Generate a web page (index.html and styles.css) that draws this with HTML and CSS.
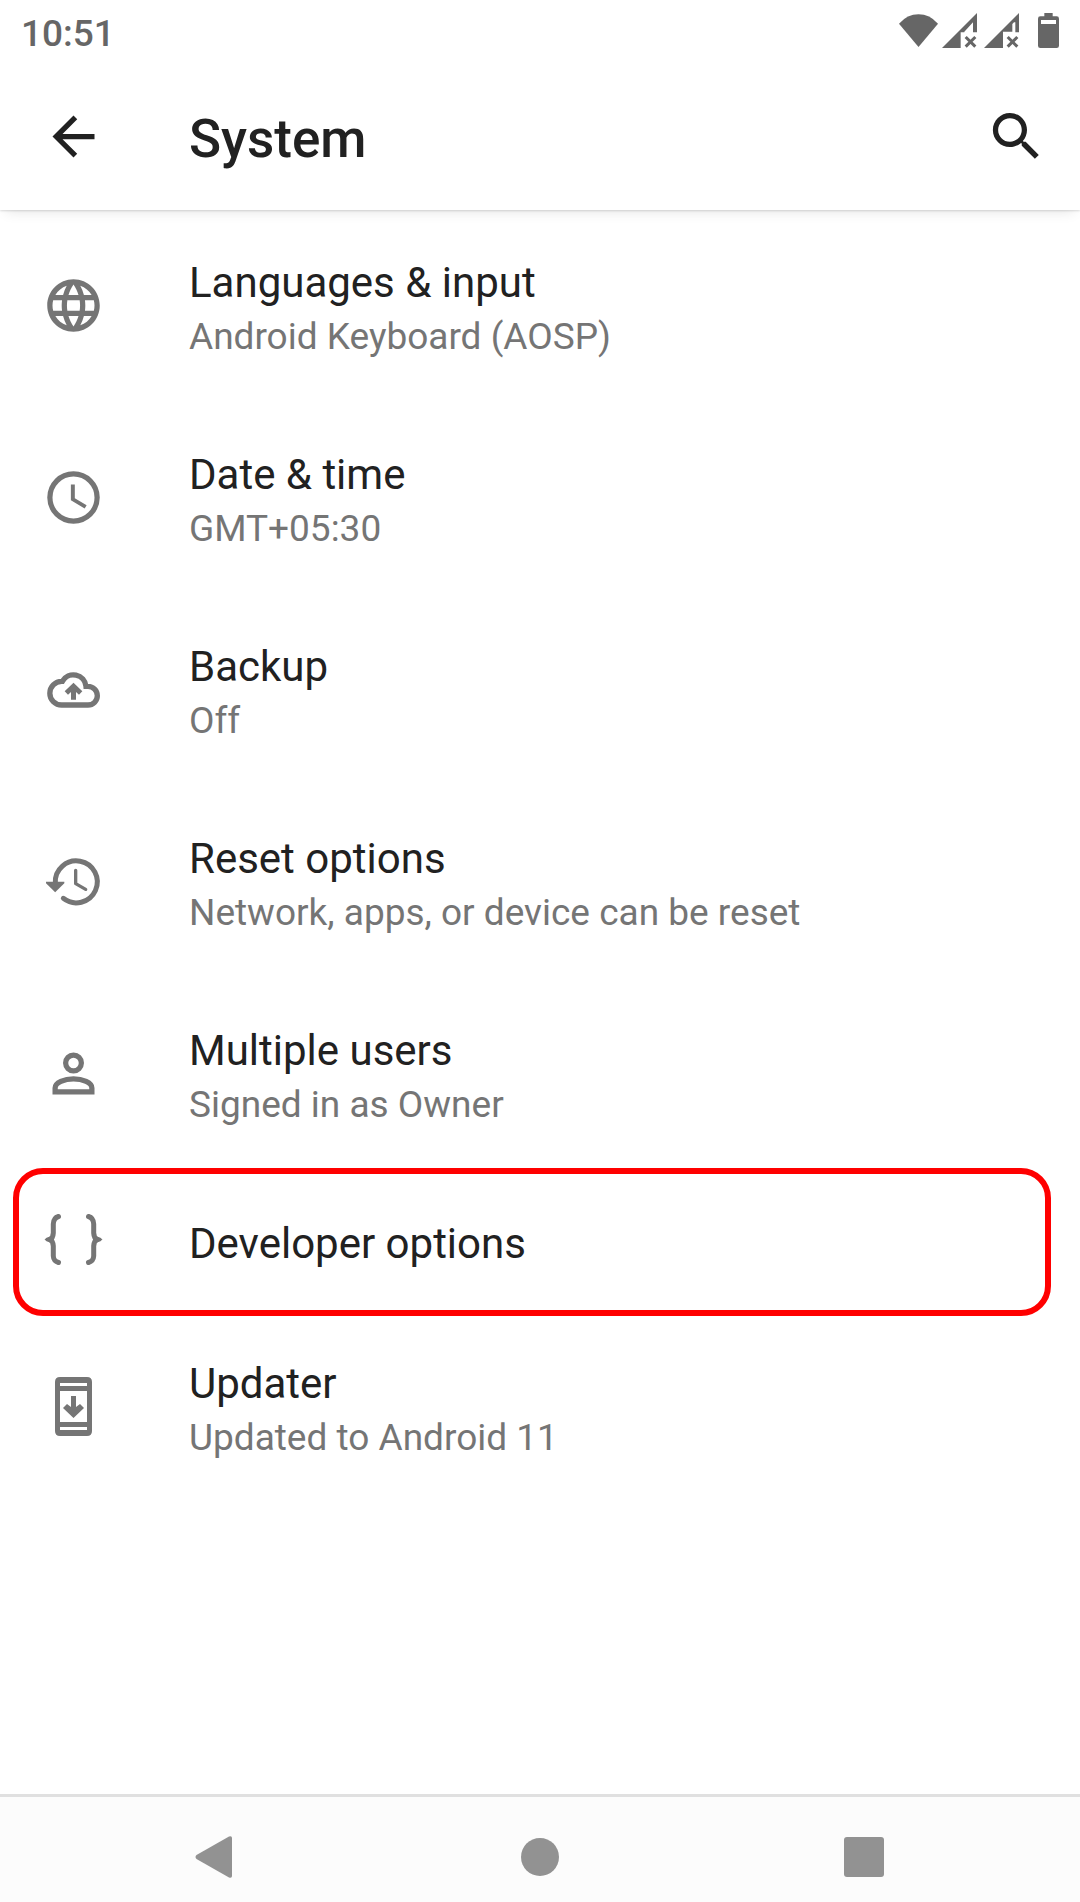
FILE: index.html
```html
<!DOCTYPE html>
<html lang="en">
<head>
<meta charset="utf-8">
<meta name="viewport" content="width=device-width, initial-scale=1">
<title>System</title>
<link rel="stylesheet" href="styles.css">
</head>
<body>
<div class="screen">
  <div class="status-bar">
    <time class="clock">10:51</time>
    <div class="status-icons">
      <svg class="wifi" viewBox="117 41 117 99" aria-hidden="true"><path d="M117 70Q142 42 175.500 42T234 70L175.500 140z"/></svg>
      <svg class="signal" viewBox="246 38 105 105" aria-hidden="true"><path d="M246 143 351 38V96H339V66L313 94V96H302V143z"/><path class="cross" d="M317 110 346 139M346 110 317 139"/></svg>
      <svg class="signal" viewBox="372 38 105 105" aria-hidden="true"><path d="M372 143 477 38V96H466V66H462L457 71V94H429V143z"/><path class="cross" d="M443 110 472 139M472 110 443 139"/></svg>
      <svg class="battery" viewBox="534 42 63 105" aria-hidden="true"><path fill-rule="evenodd" d="M553 42H578V52H590Q597 52 597 59V140Q597 147 590 147H541Q534 147 534 140V59Q534 52 541 52H553zM543 63V75H588V63z"/></svg>
    </div>
  </div>

  <header class="app-bar">
    <button class="icon-button" type="button" aria-label="Navigate up">
      <svg class="icon" viewBox="0 0 24 24" aria-hidden="true"><path d="M20 11H7.830l5.590-5.590L12 4l-8 8 8 8 1.410-1.410L7.830 13H20v-2z"/></svg>
    </button>
    <h1 class="app-title">System</h1>
    <button class="icon-button" type="button" aria-label="Search">
      <svg class="icon" viewBox="0 0 24 24" aria-hidden="true"><path d="M15.500 14h-.79l-.28-.27C15.410 12.590 16 11.110 16 9.500 16 5.910 13.090 3 9.500 3S3 5.910 3 9.500 5.910 16 9.500 16c1.610 0 3.090-.59 4.230-1.570l.27.28v.79l5 4.990L20.490 19l-4.990-5zm-6 0C7.010 14 5 11.990 5 9.500S7.010 5 9.500 5 14 7.010 14 9.500 11.990 14 9.500 14z"/></svg>
    </button>
  </header>

  <main class="content">
    <ul class="settings">
      <li><a class="row" href="#languages">
        <svg class="icon" viewBox="0 0 24 24" aria-hidden="true"><path d="M11.990 2C6.470 2 2 6.480 2 12s4.470 10 9.990 10C17.520 22 22 17.520 22 12S17.520 2 11.990 2zm6.930 6h-2.950c-.32-1.250-.78-2.450-1.380-3.560 1.840.63 3.370 1.910 4.330 3.560zM12 4.040c.83 1.200 1.480 2.530 1.910 3.960h-3.820c.43-1.430 1.080-2.760 1.910-3.960zM4.260 14C4.100 13.360 4 12.690 4 12s.1-1.360.26-2h3.380c-.08.66-.14 1.320-.14 2s.06 1.340.14 2H4.260zm.82 2h2.950c.32 1.250.78 2.450 1.380 3.560-1.840-.63-3.370-1.900-4.330-3.560zm2.950-8H5.080c.96-1.660 2.490-2.930 4.330-3.560C8.810 5.550 8.350 6.750 8.030 8zM12 19.960c-.83-1.200-1.480-2.530-1.910-3.960h3.820c-.43 1.430-1.080 2.760-1.910 3.960zM14.340 14H9.660c-.09-.66-.16-1.320-.16-2s.07-1.350.16-2h4.680c.09.65.16 1.320.16 2s-.07 1.340-.16 2zm.25 5.560c.6-1.110 1.060-2.310 1.380-3.560h2.950c-.96 1.650-2.490 2.930-4.330 3.560zM16.360 14c.08-.66.14-1.320.14-2s-.06-1.340-.14-2h3.380c.16.64.26 1.310.26 2s-.1 1.360-.26 2h-3.380z"/></svg>
        <span class="labels"><span class="name">Languages &amp; input</span><span class="summary">Android Keyboard (AOSP)</span></span>
      </a></li>
      <li><a class="row" href="#date-time">
        <svg class="icon" viewBox="0 0 24 24" aria-hidden="true"><circle class="line" cx="12" cy="12" r="9" stroke-width="2"/><path d="M12.500 7H11v6l5.250 3.150.75-1.230-4.500-2.670z"/></svg>
        <span class="labels"><span class="name">Date &amp; time</span><span class="summary">GMT+05:30</span></span>
      </a></li>
      <li><a class="row" href="#backup">
        <svg class="icon" viewBox="126 55 189 189" aria-hidden="true"><path class="line" stroke-width="16" d="M185 196A35.500 35.500 0 0 1 185 125H187A38 38 0 0 1 258 140H264A28 28 0 0 1 264 196z"/><path d="M220.500 129 247 155 237 165 228 157V180H213V157L204 165 194 155z"/></svg>
        <span class="labels"><span class="name">Backup</span><span class="summary">Off</span></span>
      </a></li>
      <li><a class="row" href="#reset">
        <svg class="icon" viewBox="126 629 189 189" aria-hidden="true"><path class="line" stroke-width="15" stroke-linecap="round" d="M166 728A63 63 0 1 1 190 774"/><path d="M138 724H193V729L165.500 756 138 729z"/><path class="line" stroke-width="10" stroke-linecap="round" stroke-linejoin="round" d="M227 690V730L257 747"/></svg>
        <span class="labels"><span class="name">Reset options</span><span class="summary">Network, apps, or device can be reset</span></span>
      </a></li>
      <li><a class="row" href="#users">
        <svg class="icon" viewBox="0 0 24 24" aria-hidden="true"><circle class="line" cx="12" cy="8" r="3" stroke-width="2"/><path class="line" stroke-width="2" d="M12 14C8.500 14 5 15.600 5 17.500V19H19V17.500C19 15.600 15.500 14 12 14z"/></svg>
        <span class="labels"><span class="name">Multiple users</span><span class="summary">Signed in as Owner</span></span>
      </a></li>
      <li><a class="row row-highlighted" href="#developer">
        <svg class="icon" viewBox="0 0 63 63" aria-hidden="true"><g class="line" stroke-width="5" stroke-linecap="round"><path d="M16.500 8.500Q11.500 10 11.300 16V25Q11 30 8 31.500 11 33 11.300 38V48Q11.500 53 16.500 54.500"/><path d="M46.500 8.500Q51.500 10 51.700 16V25Q52 30 55 31.500 52 33 51.700 38V48Q51.500 53 46.500 54.500"/></g><path d="M12 27 4 30Q2.500 31.500 4 33L12 36zM51 27 59 30Q60.500 31.500 59 33L51 36z"/></svg>
        <span class="labels"><span class="name">Developer options</span></span>
      </a></li>
      <li><a class="row" href="#updater">
        <svg class="icon" viewBox="0 0 63 63" aria-hidden="true"><path fill-rule="evenodd" d="M18 2H45Q50 2 50 7V56Q50 61 45 61H18Q13 61 13 56V7Q13 2 18 2zM18 8V11H45V8zM18 16V47H45V16zM18 52V55H45V52z"/><path d="M29 21H34V32L38 29 42 33 31.500 43 21 33 25 29 29 32z"/></svg>
        <span class="labels"><span class="name">Updater</span><span class="summary">Updated to Android 11</span></span>
      </a></li>
    </ul>
  </main>

  <nav class="nav-bar" aria-label="System navigation">
    <button class="nav-button" type="button" aria-label="Back"><svg class="nav-icon" viewBox="0 0 48 48" aria-hidden="true"><path d="M4.500 22 37 3.500Q40 2.500 40 5V43Q40 45.500 37 44.500L4.500 26Q2.500 24 4.500 22z"/></svg></button>
    <button class="nav-button" type="button" aria-label="Home"><svg class="nav-icon" viewBox="0 0 48 48" aria-hidden="true"><circle cx="24" cy="24" r="19"/></svg></button>
    <button class="nav-button" type="button" aria-label="Recent apps"><svg class="nav-icon" viewBox="0 0 48 48" aria-hidden="true"><rect x="4" y="4" width="40" height="40" rx="3"/></svg></button>
  </nav>
</div>
</body>
</html>
```
FILE: styles.css
```css
* {
  box-sizing: border-box;
}

body {
  margin: 0;
  background: #fff;
  color: #212121;
  font-family: Roboto, "Liberation Sans", sans-serif;
}

svg {
  display: block;
  fill: currentColor;
}

button {
  padding: 0;
  border: 0;
  background: none;
  color: inherit;
  cursor: pointer;
}

.screen {
  display: flex;
  flex-direction: column;
  min-height: 100vh;
}

/* Status bar */
.status-bar {
  display: flex;
  justify-content: space-between;
  align-items: center;
  height: 63px;
  padding: 0 21px;
  color: #666;
}

.clock {
  padding-top: 4px;
  font-size: 37px;
  font-weight: 500;
  line-height: 44px;
}

.status-icons {
  display: flex;
  align-items: center;
  gap: 7px;
  padding-bottom: 2px;
}

.wifi {
  width: 39px;
  height: 33px;
  margin-right: -3px;
}

.signal {
  width: 35px;
  height: 35px;
}

.cross {
  fill: none;
  stroke: currentColor;
  stroke-width: 9px;
}

.battery {
  width: 21px;
  height: 35px;
  margin-left: 12px;
}

/* App bar */
.app-bar {
  display: flex;
  align-items: center;
  height: 147px;
  padding: 0 32px 0 42px;
  box-shadow: 0 1px 2px rgba(0, 0, 0, 0.14), 0 8px 12px -6px rgba(0, 0, 0, 0.1);
  clip-path: inset(0 0 -24px);
}

.app-title {
  flex: 1;
  margin: 0 0 0 84px;
  padding-top: 4px;
  font-size: 53px;
  font-weight: 500;
  line-height: 62px;
}

.icon {
  flex: none;
  width: 63px;
  height: 63px;
}

.line {
  fill: none;
  stroke: currentColor;
}

/* Settings list */
.content {
  flex: 1;
}

.settings {
  margin: 0;
  padding: 3px 0 0;
  list-style: none;
}

.row {
  position: relative;
  display: flex;
  align-items: center;
  gap: 84px;
  min-height: 141px;
  padding: 42px;
  color: #757575;
  text-decoration: none;
}

.row .icon {
  margin: -12px 0 -4px;
}

.labels {
  flex: 1;
}

.name,
.summary {
  display: block;
}

.name {
  color: #212121;
  font-size: 42px;
  line-height: 56px;
}

.summary {
  font-size: 37px;
  line-height: 52px;
}

.row-highlighted::after {
  content: "";
  position: absolute;
  inset: -5px 29px -2px 13px;
  border: 6px solid #f00;
  border-radius: 30px;
}

/* Navigation bar */
.nav-bar {
  display: grid;
  grid-template-columns: repeat(3, 1fr);
  height: 108px;
  padding: 14px 5% 0;
  border-top: 3px solid #e0e0e0;
  background: #fcfcfc;
  color: #929292;
}

.nav-button {
  display: flex;
  justify-content: center;
  align-items: center;
}

.nav-icon {
  width: 48px;
  height: 48px;
}
```
